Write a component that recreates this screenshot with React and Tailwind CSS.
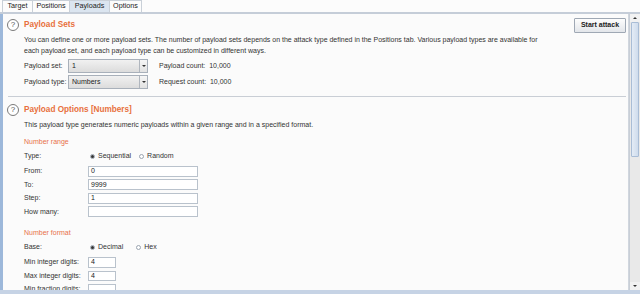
import React from "react";

const font = { fontFamily: '"Liberation Sans", Arial, sans-serif' };

function Help() {
  return (
    <div className="w-[12px] h-[12px] rounded-full border border-[#7a7a7a] bg-white flex items-center justify-center text-[8px] leading-none text-[#555] shrink-0">
      ?
    </div>
  );
}

function Radio({ on }) {
  return (
    <span className="w-[5px] h-[5px] rounded-full border border-[#9aa4b0] bg-white flex items-center justify-center shrink-0">
      {on ? <span className="w-[3px] h-[3px] rounded-full bg-[#333]" /> : null}
    </span>
  );
}

function Select({ value }) {
  return (
    <div className="w-[80px] h-[14px] border border-[#a8b0ba] bg-gradient-to-b from-[#f1f1f1] to-[#dcdcdc] flex items-center">
      <span className="flex-1 pl-[3px] text-[7px] text-[#222]">{value}</span>
      <span className="w-[8px] h-full border-l border-[#b0b6be] bg-gradient-to-b from-[#f6f6f6] to-[#e2e2e2] flex items-center justify-center">
        <span className="w-0 h-0 border-l-[2px] border-r-[2px] border-t-[2px] border-l-transparent border-r-transparent border-t-[#333]" />
      </span>
    </div>
  );
}

function Field({ label, value, w = "w-[110px]", h = "h-[13.5px]", ih = "h-[11px]" }) {
  return (
    <div className={`flex items-center ${h}`}>
      <span className="w-[64px] text-[#333]">{label}</span>
      <div className={`${w} ${ih} border border-[#b9c2cc] bg-white flex items-center pl-[2px] text-[7px] text-[#222]`}>
        {value}
      </div>
    </div>
  );
}

export default function App() {
  return (
    <div style={font} className="w-[640px] h-[294px] overflow-hidden bg-[#fbfbfb] flex flex-col text-[7px] text-[#333]">
      {/* tabs */}
      <div className="h-[14px] flex items-stretch bg-[#fcfcfc] border-b-[2px] border-[#c5cdd8] pl-[2px] shrink-0">
        <div className="w-[31px] border-l border-r border-t border-[#c9d0d8] flex items-center justify-center text-[7.2px] text-[#222]">Target</div>
        <div className="w-[37px] border-r border-t border-[#c9d0d8] flex items-center justify-center text-[7.2px] text-[#222]">Positions</div>
        <div className="w-[40px] border-r border-t border-[#c9d0d8] bg-[#dbe5f0] flex items-center justify-center text-[7.2px] text-[#222]">Payloads</div>
        <div className="w-[32px] border-r border-t border-[#c9d0d8] flex items-center justify-center text-[7.2px] text-[#222]">Options</div>
      </div>

      <div className="flex-1 flex min-h-0">
        <div className="w-[3px] bg-[#9db8da] shrink-0" />
        {/* content */}
        <div className="flex-1 min-w-0 border-r border-[#d0d6de] overflow-hidden pl-[4px] pr-[2px]">
          {/* Payload Sets */}
          <div className="h-[16px] mt-[3px] flex items-center">
            <Help />
            <span className="ml-[5px] text-[8.2px] font-bold text-[#e8703c]">Payload Sets</span>
            <div className="flex-1" />
            <div className="w-[52px] h-[15px] border border-[#9fa8b4] rounded-[1px] bg-gradient-to-b from-[#fdfdfd] to-[#e3e6ea] flex items-center justify-center text-[7px] font-bold text-[#222]">
              Start attack
            </div>
          </div>
          <div className="mt-[1px] ml-[17px] leading-[11px] text-[#333]">
            <div>You can define one or more payload sets. The number of payload sets depends on the attack type defined in the Positions tab. Various payload types are available for</div>
            <div>each payload set, and each payload type can be customized in different ways.</div>
          </div>
          <div className="ml-[17px] mt-[3px] flex items-center h-[14px]">
            <span className="w-[44px]">Payload set:</span>
            <Select value="1" />
            <span className="ml-[11px]">Payload count:&nbsp; 10,000</span>
          </div>
          <div className="ml-[17px] mt-[2px] flex items-center h-[14px]">
            <span className="w-[44px]">Payload type:</span>
            <Select value="Numbers" />
            <span className="ml-[11px]">Request count:&nbsp; 10,000</span>
          </div>
          <div className="mt-[7px] ml-[1px] h-px bg-[#c9ced5]" />

          {/* Payload Options */}
          <div className="h-[16px] mt-[5px] flex items-center">
            <Help />
            <span className="ml-[5px] text-[8.2px] font-bold text-[#e8703c]">Payload Options [Numbers]</span>
          </div>
          <div className="ml-[17px] mt-[1px] leading-[11px]">
            This payload type generates numeric payloads within a given range and in a specified format.
          </div>
          <div className="ml-[17px] mt-[6px] leading-[11px] text-[#e8704a]">Number range</div>
          <div className="ml-[17px] mt-[3px] h-[12px] flex items-center">
            <span className="w-[66px]">Type:</span>
            <Radio on />
            <span className="ml-[3px]">Sequential</span>
            <span className="ml-[8px]"><Radio /></span>
            <span className="ml-[3px]">Random</span>
          </div>
          <div className="ml-[17px] mt-[2.5px]">
            <Field label="From:" value="0" />
            <Field label="To:" value="9999" />
            <Field label="Step:" value="1" />
            <Field label="How many:" value="" />
          </div>
          <div className="ml-[17px] mt-[8px] leading-[11px] text-[#e8704a]">Number format</div>
          <div className="ml-[17px] mt-[4px] h-[12px] flex items-center">
            <span className="w-[66px]">Base:</span>
            <Radio on />
            <span className="ml-[3px]">Decimal</span>
            <span className="ml-[13px]"><Radio /></span>
            <span className="ml-[3px]">Hex</span>
          </div>
          <div className="ml-[17px] mt-[2px]">
            <Field label="Min integer digits:" value="4" w="w-[28px]" ih="h-[10.5px]" />
            <Field label="Max integer digits:" value="4" w="w-[28px]" ih="h-[10.5px]" />
            <Field label="Min fraction digits:" value="" w="w-[28px]" ih="h-[10.5px]" />
          </div>
        </div>
        {/* scrollbar */}
        <div className="w-[11px] shrink-0 flex flex-col bg-[#e9e9e9] border-l border-[#c8ced6]">
          <div className="h-[8px] flex items-center justify-center bg-[#f2f2f2]">
            <span className="w-0 h-0 border-l-[2px] border-r-[2px] border-b-[2px] border-l-transparent border-r-transparent border-b-[#333]" />
          </div>
          <div className="h-[135px] mx-[1px] bg-gradient-to-r from-[#e4ecf6] to-[#cfdcec] border border-[#a9bdd6] rounded-[1px]" />
          <div className="flex-1" />
          <div className="h-[8px] flex items-center justify-center bg-[#f2f2f2]">
            <span className="w-0 h-0 border-l-[2px] border-r-[2px] border-t-[2px] border-l-transparent border-r-transparent border-t-[#333]" />
          </div>
        </div>
      </div>
      <div className="h-[4px] shrink-0 bg-[#c6d3e5]" />
    </div>
  );
}
